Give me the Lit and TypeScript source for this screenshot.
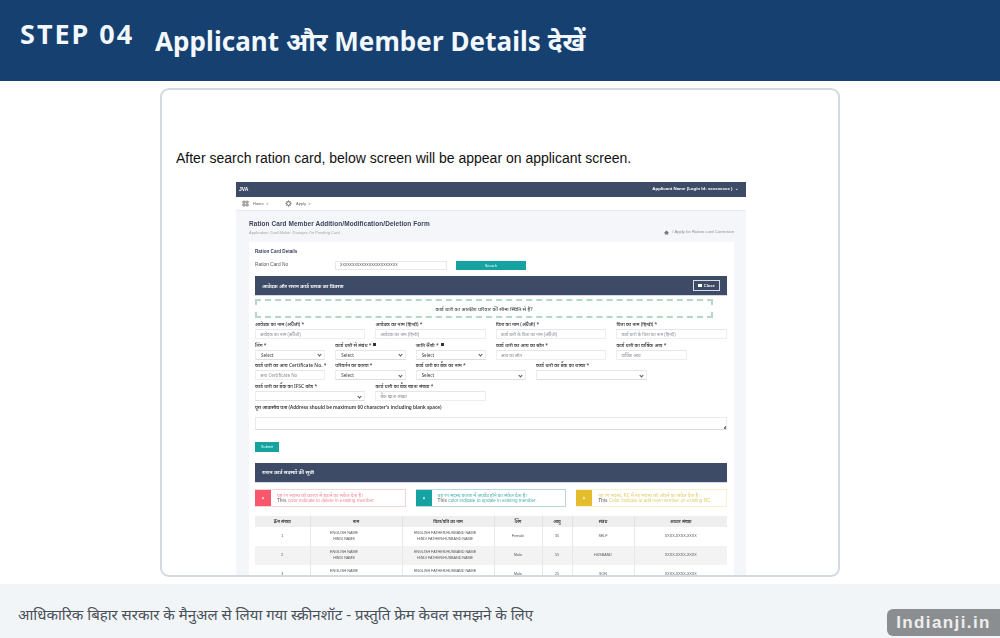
import { LitElement, html, css, svg } from "lit";
import { customElement } from "lit/decorators.js";

const gridIcon = svg`<path d="M1.5 2h3.5v3.2H1.5zM7 2h3.5v3.2H7zM1.5 7h3.5v3.2H1.5zM7 7h3.5v3.2H7z" fill="none" stroke="currentColor" stroke-width="1.1"/>`;
const homeIcon = svg`<path d="M.5 6.2 6 1.2l5.5 5-.8.7-.7-.6V11H2V6.3l-.7.6Z" fill="currentColor"/>`;
const gearIcon = svg`<circle cx="6" cy="6" r="3.2" fill="none" stroke="currentColor" stroke-width="1.4"/><path d="M6 .5V3M6 9v2.5M.5 6H3M9 6h2.5M2.1 2.1 3.9 3.9M8.1 8.1l1.8 1.8M2.1 9.9 3.9 8.1M8.1 3.9l1.8-1.8" stroke="currentColor" stroke-width="1.1"/>`;
const dropIcon = svg`<path d="M6 1.5 9.5 8H2.5Z" fill="currentColor"/><rect x="5.2" y="8.6" width="1.6" height="1.6" fill="currentColor"/>`;

type Field = { label: string; span: number; kind: "input" | "select"; ph?: string; info?: boolean };

const rows: Field[][] = [
  [
    { label: "आवेदक का नाम (अंग्रेजी) *", span: 3, kind: "input", ph: "आवेदक का नाम (अंग्रेजी)" },
    { label: "आवेदक का नाम (हिन्दी) *", span: 3, kind: "input", ph: "आवेदक का नाम (हिन्दी)" },
    { label: "पिता का नाम (अंग्रेजी) *", span: 3, kind: "input", ph: "कार्ड धारी के पिता का नाम (अंग्रेजी)" },
    { label: "पिता का नाम (हिन्दी) *", span: 3, kind: "input", ph: "कार्ड धारी के पिता का नाम (हिन्दी)" },
  ],
  [
    { label: "लिंग *", span: 2, kind: "select", ph: "Select" },
    { label: "कार्ड धारी से संबंध *", span: 2, kind: "select", ph: "Select", info: true },
    { label: "जाति श्रेणी *", span: 2, kind: "select", ph: "Select", info: true },
    { label: "कार्ड धारी का आय का स्रोत *", span: 3, kind: "input", ph: "आय का स्रोत" },
    { label: "कार्ड धारी का वार्षिक आय *", span: 2, kind: "input", ph: "वार्षिक आय" },
  ],
  [
    { label: "कार्ड धारी का आय Certificate No. *", span: 2, kind: "input", ph: "आय Certificate No" },
    { label: "परिवर्तन का कारण *", span: 2, kind: "select", ph: "Select" },
    { label: "कार्ड धारी का बैंक का नाम *", span: 3, kind: "select", ph: "Select" },
    { label: "कार्ड धारी का बैंक का शाखा *", span: 3, kind: "select" },
  ],
  [
    { label: "कार्ड धारी का बैंक का IFSC कोड *", span: 3, kind: "select" },
    { label: "कार्ड धारी का बैंक खाता संख्या *", span: 3, kind: "input", ph: "बैंक खाता संख्या" },
  ],
];

const alerts = [
  { cls: "red", hi: "यह रंग सदस्य को कारण से हटाने का संकेत देता है।", en: "color indicate to delete in existing member.", t: "This" },
  { cls: "teal", hi: "यह रंग सदस्य कारण में अपडेट होने का संकेत देता है।", en: "color indicate to update in existing member.", t: "This" },
  { cls: "yellow", hi: "यह रंग सदस्य, RC में नए सदस्य को जोड़ने का संकेत देता है।", en: "Color Indicate to add new member on existing RC.", t: "This" },
];

const heads = ["क्रम संख्या", "नाम", "पिता/पति का नाम", "लिंग", "आयु", "संबंध", "आधार संख्या"];
const people = [
  ["1", "Female", "35", "SELF"],
  ["2", "Male", "55", "HUSBAND"],
  ["3", "Male", "25", "SON"],
];

@customElement("app-root")
export class AppRoot extends LitElement {
  static styles = css`
    :host { display: block; width: 1000px; height: 638px; position: relative; overflow: hidden; background: #fff; font-family: "Noto Sans","Noto Sans Devanagari","Lohit Devanagari",sans-serif; }
    .head { height: 81px; box-sizing: border-box; background: #164070; color: #f2f8fd; display: flex; align-items: flex-start; padding-left: 20px; }
    .step { font: 700 27px/1 "Noto Sans", sans-serif; letter-spacing: 2px; margin-top: 20px; width: 135px; flex: none; white-space: nowrap; }
    .title { font-size: 26px; font-weight: 700; line-height: 36px; margin-top: 23px; white-space: nowrap; letter-spacing: .07px; }
    .card { width: 680px; height: 489px; box-sizing: border-box; margin: 7px 0 0 160px; border: 2px solid #d2dae2; border-radius: 9px; overflow: hidden; padding: 60px 0 0 14px; background: #fff; }
    .lead { font: 14px/16px "Liberation Sans", sans-serif; color: #111; white-space: nowrap; }
    .shot { width: 510px; height: 393px; margin: 16px 0 0 60px; background: #f4f6f9; overflow: hidden; filter: blur(0.4px); color: #3a4256; }
    .nav { height: 15px; background: #3d4b66; display: flex; align-items: center; justify-content: space-between; padding: 0 8px 0 3px; color: #fff; font: 700 4.4px/1 "Liberation Sans", sans-serif; box-shadow: 0 1px 0 #2e3a50; }
    .nav b { font-size: 5px; }
    .crumbs { background: #fff; border-bottom: 1px solid #e9ebef; display: flex; align-items: center; padding-left: 6px; font: 4px/1 "Liberation Sans", sans-serif; color: #666; height: 13px; }
    .crumbs svg { width: 7px; height: 7px; margin-right: 4px; color: #555; }
    .crumbs span { width: 32px; }
    .page { padding: 9px 12px 0 13px; }
    .ptitle { display: flex; justify-content: space-between; align-items: flex-end; height: 15px; }
    .ptitle h1 { margin: 0; font: 700 6.45px/8px "Liberation Sans", sans-serif; color: #3a4358; letter-spacing: .1px; }
    .ptitle p { margin: 2px 0 0; font: 4px/5px "Liberation Sans", sans-serif; color: #a3a7ae; }
    .ptitle .rc { font: 4.2px/6px "Liberation Sans", sans-serif; color: #8a8f98; display: flex; align-items: center; gap: 3px; }
    .ptitle .rc svg { width: 5px; height: 5px; color: #777; }
    .panel { margin-top: 7px; background: #fff; padding: 7px 7px 0 6px; height: 350px; }
    .sub { font: 700 4.6px/6px "Liberation Sans", sans-serif; color: #3a4358; }
    .rno { display: flex; align-items: center; margin-top: 6px; font: 4.8px/9px "Liberation Sans", sans-serif; color: #555; }
    .rno label { width: 80px; margin-top: -3px; }
    .rno .val { width: 112px; height: 9px; box-sizing: border-box; border: 1px solid #e6e8ec; font-size: 3.6px; line-height: 7px; padding-left: 4px; color: #444; }
    .rno .btn { width: 70px; height: 9px; margin-left: 9px; background: #17a2a2; color: #dff; text-align: center; font-size: 4px; line-height: 9px; }
    .bar { height: 19px; background: #3d4b66; color: #fff; display: flex; align-items: center; justify-content: space-between; padding: 0 7px; font-size: 5.2px; font-weight: 600; box-shadow: 0 1px 0 #d5d8de; }
    .bar.one { margin-top: 6px; }
    .bar.two { margin-top: 11px; }
    .close { width: 27px; height: 11px; box-sizing: border-box; border: 1px solid #d7dce6; display: flex; align-items: center; justify-content: center; gap: 1.5px; font: 700 4px/1 "Liberation Sans", sans-serif; }
    .close i { width: 4px; height: 3px; background: #fff; display: block; }
    .notice { width: 458px; height: 19px; box-sizing: border-box; margin-top: 4px; border: 2.5px dashed #b5d8c6; display: flex; align-items: center; justify-content: center; font-size: 5.3px; color: #333; background: #fdfffe; }
    .grid { display: grid; grid-template-columns: repeat(12, 40.17px); width: 482px; margin-top: 1px; }
    .field { padding-right: 10px; height: 20.7px; }
    .s2 { grid-column: span 2; }
    .s3 { grid-column: span 3; }
    .lbl { font-size: 4.9px; line-height: 10px; height: 10px; color: #333; font-weight: 500; white-space: nowrap; display: flex; align-items: center; gap: 2px; }
    .lbl i { width: 3px; height: 3px; background: #333; display: block; }
    .ctl { height: 10px; box-sizing: border-box; border: 1px solid #eceef1; border-top-color: #e4e6ea; font-size: 4.5px; line-height: 8px; padding-left: 4px; color: #8b8f96; display: flex; justify-content: space-between; align-items: center; padding-right: 3px; white-space: nowrap; overflow: hidden; }
    .ctl.sel { color: #444; border-bottom-color: #ddd; padding-left: 5px; }
    .chev { width: 2px; height: 2px; border-right: .6px solid #555; border-bottom: .6px solid #555; transform: rotate(45deg); }
    .addr { font-size: 4.7px; line-height: 6px; color: #333; font-weight: 600; margin-top: 2px; white-space: nowrap; }
    .area { width: 472px; height: 13px; box-sizing: border-box; border: 1px solid #e8eaee; border-bottom-color: #d8dade; margin-top: 7px; position: relative; }
    .area::after { content: ""; position: absolute; right: 0; bottom: 0; width: 3px; height: 3px; background: linear-gradient(135deg, transparent 50%, #777 50%); }
    .submit { width: 24px; height: 10px; margin-top: 12px; background: #17a2a2; color: #dff; font: 3.8px/10px "Liberation Sans", sans-serif; text-align: center; }
    .alerts { display: flex; gap: 10px; margin-top: 7px; width: 472px; }
    .alert { width: 150.6px; height: 18px; box-sizing: border-box; border: 1px solid; border-left: 0; display: flex; font-size: 4.8px; line-height: 6px; white-space: nowrap; overflow: hidden; }
    .alert .ic { width: 16px; flex: none; display: flex; align-items: center; justify-content: center; color: #fff; }
    .alert .ic svg { width: 4px; height: 4px; }
    .alert .tx { padding: 2px 0 0 6px; }
    .alert .en { font-family: "Liberation Sans", sans-serif; font-size: 4.6px; }
    .alert .en b { font-weight: 700; color: #888; }
    .red { border-color: #f2d6d6; color: #ee8f9a; }
    .red .ic { background: #f8576c; }
    .teal { border-color: #b9d7e0; color: #4fb0b0; }
    .teal .ic { background: #17a2a2; }
    .yellow { border-color: #f8f1cf; color: #e2cf70; }
    .yellow .ic { background: #e3bd2c; }
    table { border-collapse: collapse; table-layout: fixed; width: 472px; margin-top: 9px; font: 3.7px/6px "Liberation Sans", sans-serif; color: #555; text-align: center; }
    th { height: 11px; padding: 0; background: #efefef; font-family: "Noto Sans","Noto Sans Devanagari","Lohit Devanagari",sans-serif; font-size: 4.4px; font-weight: 600; color: #333; border-right: 1px solid #e2e2e2; }
    td { height: 19px; padding: 0; border-right: 1px solid #e8e8e8; }
    td.nm { padding-right: 24px; }
    td.ft { padding-right: 6px; }
    th:last-child, td:last-child { border-right: 0; }
    tbody tr:nth-child(2) td { background: #f3f3f3; }
    .foot { height: 54px; margin-top: 7px; background: #f2f5f8; box-sizing: border-box; padding: 17px 0 0 18px; font-size: 15px; line-height: 26px; color: #4a5058; white-space: nowrap; }
    .brand { position: absolute; right: 0; top: 609px; width: 113px; height: 27px; background: #8b8e90; border-radius: 6px 0 0 6px; color: #eee; font: 700 17px/27px "Liberation Sans", sans-serif; letter-spacing: 1.4px; text-align: center; }
  `;

  private field(f: Field) {
    return html`<div class="field s${f.span}">
      <div class="lbl">${f.label}${f.info ? html`<i></i>` : ""}</div>
      ${f.kind === "select"
        ? html`<div class="ctl sel"><span>${f.ph ?? ""}</span><span class="chev"></span></div>`
        : html`<div class="ctl"><span>${f.ph ?? ""}</span></div>`}
    </div>`;
  }

  render() {
    return html`
      <div class="head">
        <div class="step">STEP 04</div>
        <div class="title">Applicant और Member Details देखें</div>
      </div>
      <div class="card">
        <div class="lead">After search ration card, below screen will be appear on applicant screen.</div>
        <div class="shot">
          <div class="nav"><b>JVA</b><span>Applicant Name (Login Id: xxxxxxxxx ) &nbsp;⌄</span></div>
          <div class="crumbs">
            <svg viewBox="0 0 12 12">${gridIcon}</svg><span>Home &nbsp;&gt;</span>
            <svg viewBox="0 0 12 12">${gearIcon}</svg><span>Apply &nbsp;&gt;</span>
          </div>
          <div class="page">
            <div class="ptitle">
              <div>
                <h1>Ration Card Member Addition/Modification/Deletion Form</h1>
                <p>Application Card Maker Changes On Pending Card</p>
              </div>
              <div class="rc"><svg viewBox="0 0 12 12">${homeIcon}</svg>/ Apply for Ration card Correction</div>
            </div>
            <div class="panel">
              <div class="sub">Ration Card Details</div>
              <div class="rno">
                <label>Ration Card No</label>
                <div class="val">XXXXXXXXXXXXXXXXXXXXXXXX</div>
                <div class="btn">Search</div>
              </div>
              <div class="bar one"><span>आवेदक और राशन कार्ड धारक का विवरण</span><div class="close"><i></i>Close</div></div>
              <div class="notice">कार्ड धारी का आरक्षण परिवार की सीमा स्थिति से है?</div>
              <div class="grid">${rows.flat().map((f) => this.field(f))}</div>
              <div class="addr">पूरा आवासीय पता (Address should be maximum 60 character's including blank space)</div>
              <div class="area"></div>
              <div class="submit">Submit</div>
              <div class="bar two"><span>राशन कार्ड सदस्यों की सूची</span></div>
              <div class="alerts">
                ${alerts.map((a) => html`<div class="alert ${a.cls}">
                  <div class="ic"><svg viewBox="0 0 12 12">${dropIcon}</svg></div>
                  <div class="tx"><div>${a.hi}</div><div class="en"><b>${a.t}</b> ${a.en}</div></div>
                </div>`)}
              </div>
              <table>
                <colgroup>
                  ${[55, 92, 92, 48, 30, 62, 93].map((w) => html`<col style="width:${w}px" />`)}
                </colgroup>
                <thead><tr>${heads.map((h) => html`<th>${h}</th>`)}</tr></thead>
                <tbody>
                  ${people.map((p) => html`<tr>
                    <td>${p[0]}</td>
                    <td class="nm">ENGLISH NAME<br />HINDI NAME</td>
                    <td class="ft">ENGLISH FATHER/HUSBAND NAME<br />HINDI FATHER/HUSBAND NAME</td>
                    <td>${p[1]}</td><td>${p[2]}</td><td>${p[3]}</td>
                    <td>XXXX-XXXX-XXXX</td>
                  </tr>`)}
                </tbody>
              </table>
            </div>
          </div>
        </div>
      </div>
      <div class="foot">आधिकारिक बिहार सरकार के मैनुअल से लिया गया स्क्रीनशॉट - प्रस्तुति फ्रेम केवल समझने के लिए</div>
      <div class="brand">Indianji.in</div>
    `;
  }
}
